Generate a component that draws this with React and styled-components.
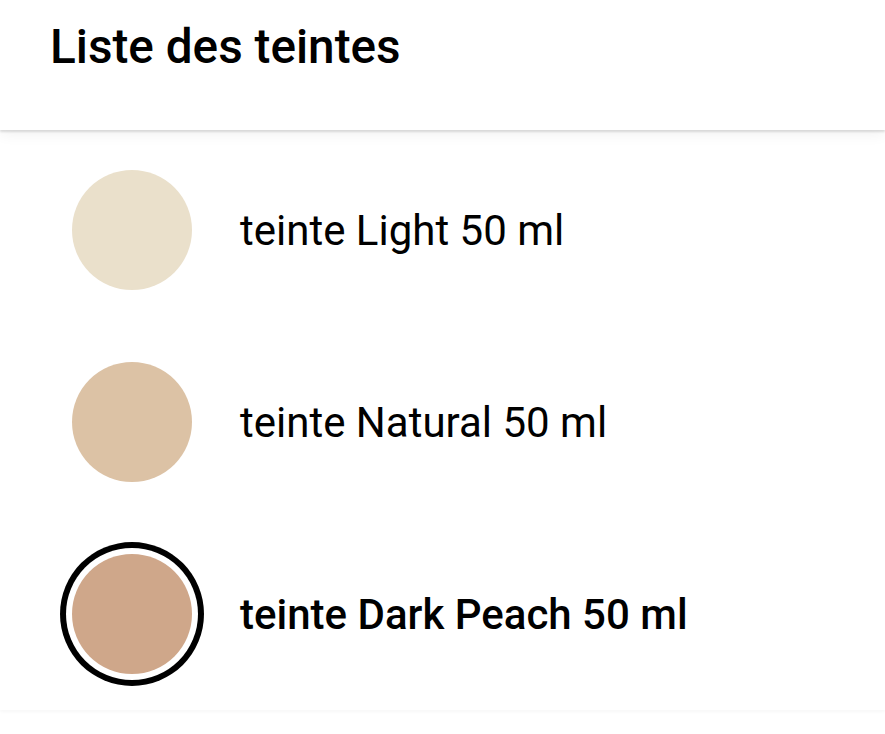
import styled, { createGlobalStyle } from "styled-components";

const GlobalStyle = createGlobalStyle`
    body {
        margin: 0;
        background: #ffffff;
        font-family: Roboto, "Liberation Sans", sans-serif;
        color: #000000;
    }
`

const Pagina = styled.div`
    width: 885px;
    height: 734px;
    overflow: hidden;
    background: #ffffff;
`
const Cabecalho = styled.header`
    position: relative;
    z-index: 1;
    height: 130px;
    box-sizing: border-box;
    padding: 19px 0 0 50px;
    background: #ffffff;
    box-shadow: 0 2px 2px rgba(0, 0, 0, 0.12), 0 4px 14px rgba(0, 0, 0, 0.06);
`
const Titulo = styled.h1`
    margin: 0;
    font-size: 47.7px;
    line-height: 56px;
    font-weight: 500;
`
const Lista = styled.ul`
    list-style: none;
    margin: 0;
    padding: 4px 0 0 0;
    background: #ffffff;
    box-shadow: 0 2px 3px rgba(0, 0, 0, 0.03);
`
const Linha = styled.li`
    height: 192px;
    display: flex;
    align-items: center;
    padding-left: 72px;
    gap: 48px;
`
const Amostra = styled.span`
    flex: none;
    width: 120px;
    height: 120px;
    border-radius: 50%;
    background: ${props => props.cor};
    box-shadow: ${props => props.selecionado ? "0 0 0 6px #ffffff, 0 0 0 12px #000000" : "none"};
`
const Rotulo = styled.span`
    font-size: 42px;
    font-weight: ${props => props.selecionado ? 500 : 400};
`

const teintes = [
    { nome: "teinte Light 50 ml", cor: "#eae0cb" },
    { nome: "teinte Natural 50 ml", cor: "#dcc2a5" },
    { nome: "teinte Dark Peach 50 ml", cor: "#cfa78a", selecionado: true },
]

const App = () => {
    return (
        <Pagina>
            <GlobalStyle />
            <Cabecalho>
                <Titulo>Liste des teintes</Titulo>
            </Cabecalho>
            <Lista>
                {teintes.map(t => (
                    <Linha key={t.nome}>
                        <Amostra cor={t.cor} selecionado={t.selecionado} />
                        <Rotulo selecionado={t.selecionado}>{t.nome}</Rotulo>
                    </Linha>
                ))}
            </Lista>
        </Pagina>
    )
}

export default App
